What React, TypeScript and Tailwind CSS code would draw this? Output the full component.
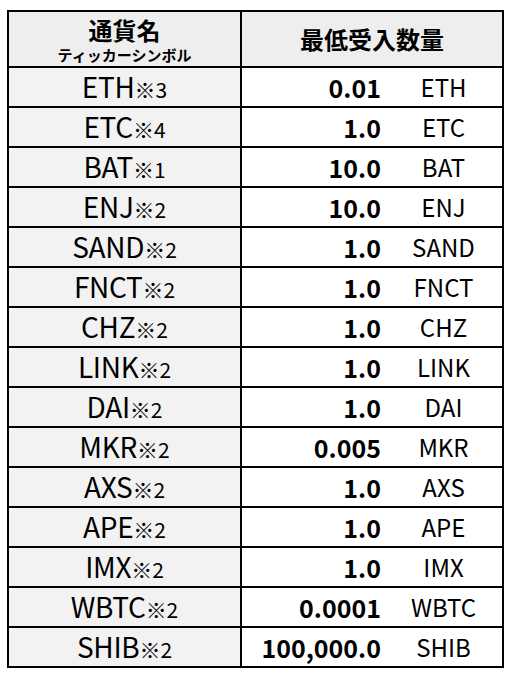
const rows: [string, string, string, string][] = [
  ["ETH", "※3", "0.01", "ETH"],
  ["ETC", "※4", "1.0", "ETC"],
  ["BAT", "※1", "10.0", "BAT"],
  ["ENJ", "※2", "10.0", "ENJ"],
  ["SAND", "※2", "1.0", "SAND"],
  ["FNCT", "※2", "1.0", "FNCT"],
  ["CHZ", "※2", "1.0", "CHZ"],
  ["LINK", "※2", "1.0", "LINK"],
  ["DAI", "※2", "1.0", "DAI"],
  ["MKR", "※2", "0.005", "MKR"],
  ["AXS", "※2", "1.0", "AXS"],
  ["APE", "※2", "1.0", "APE"],
  ["IMX", "※2", "1.0", "IMX"],
  ["WBTC", "※2", "0.0001", "WBTC"],
  ["SHIB", "※2", "100,000.0", "SHIB"],
];

export default function App() {
  return (
    <div
      className="w-[510px] h-[682px] bg-white pl-[7px] pt-[10px] text-black"
      style={{ fontFamily: '"Noto Sans CJK JP", "Noto Sans", sans-serif' }}
    >
      <table className="border-collapse border-2 border-black table-fixed w-[495px]">
        <colgroup>
          <col className="w-[233px]" />
          <col className="w-[144px]" />
          <col className="w-[118px]" />
        </colgroup>
        <thead>
          <tr className="h-[56px] bg-[#eeeeee]">
            <th className="border-2 border-black p-0 text-center align-middle">
              <div className="text-[24px] font-bold leading-[24px] pt-[2px]">通貨名</div>
              <div className="text-[15px] font-bold leading-[17px] pt-[4px]">ティッカーシンボル</div>
            </th>
            <th colSpan={2} className="border-2 border-black p-0 text-center align-middle text-[24px] font-bold">
              最低受入数量
            </th>
          </tr>
        </thead>
        <tbody>
          {rows.map(([name, note, min, unit]) => (
            <tr key={name} className="h-[40px]">
              <td className="border-2 border-black bg-[#f2f2f2] p-0 text-center align-middle">
                <span className="text-[28px] leading-none tracking-[-0.3px]">{name}</span>
                <span className="text-[21px] leading-none">{note}</span>
              </td>
              <td className="border-y-2 border-black p-0 pr-[4px] text-right align-middle text-[25px] font-bold leading-none">
                {min}
              </td>
              <td className="border-y-2 border-r-2 border-black p-0 text-center align-middle text-[24px] leading-none">
                {unit}
              </td>
            </tr>
          ))}
        </tbody>
      </table>
    </div>
  );
}
